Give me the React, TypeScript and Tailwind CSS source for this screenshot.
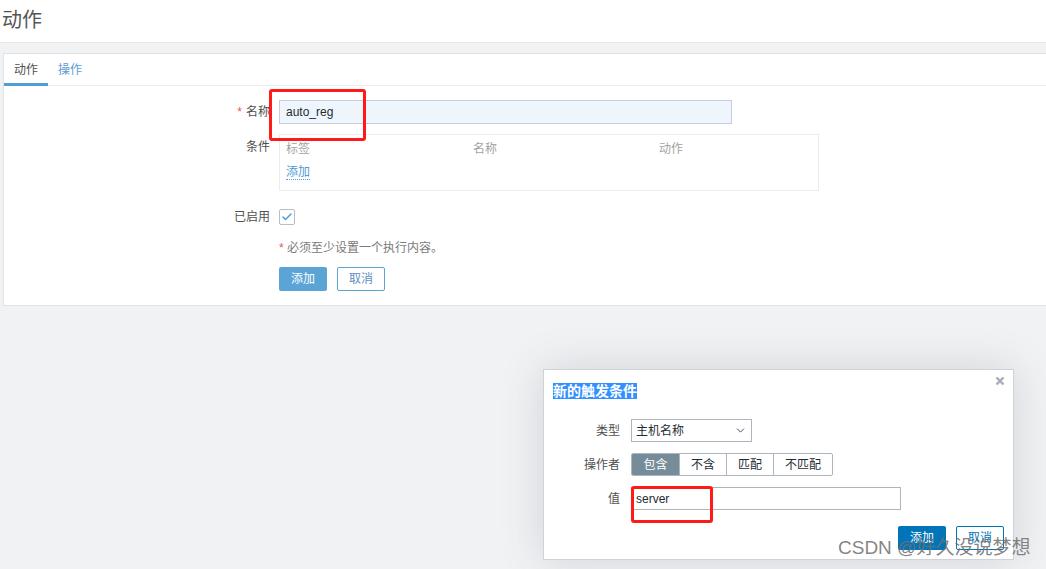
import { ChevronDown, Check } from "lucide-react";

const font = "font-['Liberation_Sans','Noto_Sans_CJK_SC',sans-serif]";

function Label({ children, required }: { children: string; required?: boolean }) {
  return (
    <div className="w-[275px] shrink-0 pr-[9px] text-right text-[12px] text-[#4f4f4f]">
      {required && <span className="mr-[4px] text-[#e45959]">*</span>}
      {children}
    </div>
  );
}

function TriggerDialog() {
  const ops = ["包含", "不含", "匹配", "不匹配"];
  return (
    <div className="absolute left-[543px] top-[369px] h-[191px] w-[471px] border border-[#cdd3d9] bg-white shadow-[0_0_40px_rgba(60,75,90,0.18)]">
      <div className="flex items-start justify-between pl-[9px] pr-[8px] pt-[13px]">
        <span className="bg-[#3390ff] text-[14px] font-bold leading-[16px] text-white">新的触发条件</span>
        <svg width="10" height="10" viewBox="0 0 10 10" className="mt-[-7px]">
          <path d="M1.5 1.5 L8.5 8.5 M8.5 1.5 L1.5 8.5" stroke="#a3adb7" strokeWidth="2.4" />
        </svg>
      </div>

      <div className="mt-[20px] flex flex-col gap-[11px] text-[12px]">
        <div className="flex items-center">
          <div className="w-[76px] text-right text-[#4f4f4f]">类型</div>
          <div className="ml-[11px] flex h-[23px] w-[121px] items-center justify-between border border-[#acb5be] pl-[4px] pr-[4px] text-[#1f2c33]">
            主机名称
            <ChevronDown size={13} strokeWidth={1.6} className="text-[#3a3a3a]" />
          </div>
        </div>
        <div className="flex items-center">
          <div className="w-[76px] text-right text-[#4f4f4f]">操作者</div>
          <div className="ml-[11px] flex h-[23px] overflow-hidden rounded-[2px] border border-[#acb5be]">
            {ops.map((o, i) => (
              <div
                key={o}
                className={
                  i === 0
                    ? "flex w-[47px] items-center justify-center bg-[#768d99] text-white"
                    : i === 3
                    ? "flex w-[59px] items-center justify-center border-l border-[#acb5be] text-[#1f2c33]"
                    : "flex w-[47px] items-center justify-center border-l border-[#acb5be] text-[#1f2c33]"
                }
              >
                {o}
              </div>
            ))}
          </div>
        </div>
        <div className="flex items-center">
          <div className="w-[76px] text-right text-[#4f4f4f]">值</div>
          <div className="ml-[11px] flex h-[23px] w-[270px] items-center border border-[#acb5be] pl-[4px] text-[#1f2c33]">
            server
          </div>
        </div>
      </div>

      <div className="mt-[16px] flex justify-end gap-[10px] pr-[9px] text-[12px]">
        <button className="h-[24px] w-[48px] rounded-[2px] bg-[#0275b8] text-white">添加</button>
        <button className="h-[24px] w-[48px] rounded-[2px] border border-[#0275b8] bg-white text-[#0275b8]">取消</button>
      </div>
    </div>
  );
}

export default function App() {
  return (
    <div className={`relative h-[569px] w-[1046px] overflow-hidden bg-[#f1f2f4] ${font}`}>
      <header className="flex h-[43px] items-center border-b border-[#e3e6e9] bg-white pb-[3px] pl-[2px]">
        <h1 className="text-[20px] font-normal text-[#555]">动作</h1>
      </header>

      <main className="ml-[3px] mr-[-4px] mt-[10px] border border-[#e0e3e6] bg-white pb-[14px]">
        <nav className="flex h-[32px] border-b border-[#ebeef0] text-[12px]">
          <div className="-mb-px flex items-center border-b-[3px] border-[#4f9fd5] px-[10px] pt-[3px] text-[#4f4f4f]">动作</div>
          <div className="flex items-center px-[10px] text-[#5b9bd2]">操作</div>
        </nav>

        <section className="pt-[14px]">
          <div className="flex items-center">
            <Label required>名称</Label>
            <div className="flex h-[24px] w-[453px] items-center border border-[#c6cfd8] bg-[#eff5fd] pl-[6px] text-[12px] text-[#1f2c33]">
              auto_reg
            </div>
          </div>

          <div className="mt-[10px] flex items-start">
            <div className="pt-[4px]"><Label>条件</Label></div>
            <div className="h-[57px] w-[540px] border border-[#ececec] px-[6px] pt-[5px] text-[12px]">
              <div className="flex text-[#a3a3a3]">
                <span className="w-[187px]">标签</span>
                <span className="w-[186px]">名称</span>
                <span>动作</span>
              </div>
              <div className="mt-[5px]">
                <span className="border-b border-dotted border-[#4f9ad6] text-[#4f9ad6]">添加</span>
              </div>
            </div>
          </div>

          <div className="mt-[17px] flex items-center">
            <Label>已启用</Label>
            <div className="flex h-[16px] w-[16px] items-center justify-center rounded-[2px] border border-[#b5bec6] bg-white">
              <Check size={12} strokeWidth={3} className="text-[#4f9fd5]" />
            </div>
          </div>

          <div className="ml-[275px] mt-[13px] text-[12px] text-[#7a7a7a]">
            <span className="text-[#e45959]">*</span> 必须至少设置一个执行内容。
          </div>

          <div className="ml-[275px] mt-[10px] flex gap-[10px] text-[12px]">
            <button className="h-[24px] w-[48px] rounded-[2px] bg-[#5ba4d6] text-white">添加</button>
            <button className="h-[24px] w-[48px] rounded-[2px] border border-[#5ba4d6] bg-white text-[#5d8fbf]">取消</button>
          </div>
        </section>
      </main>

      <TriggerDialog />

      {/* annotation boxes */}
      <div className="absolute left-[269px] top-[89px] h-[52px] w-[97px] rounded-[3px] border-[3px] border-[#ff1a1a]" />
      <div className="absolute left-[631px] top-[486px] h-[37px] w-[82px] rounded-[3px] border-[3px] border-[#ff1a1a]" />

      {/* watermark */}
      <div className="absolute left-[838px] top-[537px] text-[19px] leading-[22px] text-[rgba(110,110,110,0.85)]">
        CSDN @好久没说梦想
      </div>
    </div>
  );
}
